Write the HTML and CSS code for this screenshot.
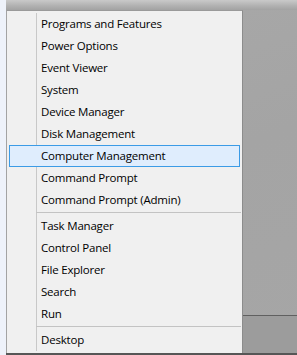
FILE: index.html
```html
<!DOCTYPE html>
<html>
  <head>
    <meta name="viewport" content="width=device-width, initial-scale=1.0" />
    <title>Quick Link Menu</title>
    <link rel="stylesheet" href="styles.css">
  </head>

  <body>
    <div class="screen">
      <div class="side"></div>

      <div class="desk">
        <div class="top-glow"></div>

        <div class="middle">
          <!-- Win+X menu -->
          <ul class="menu">
            <li class="item">Programs and Features</li>
            <li class="item">Power Options</li>
            <li class="item">Event Viewer</li>
            <li class="item">System</li>
            <li class="item">Device Manager</li>
            <li class="item">Disk Management</li>
            <li class="item active">Computer Management</li>
            <li class="item">Command Prompt</li>
            <li class="item">Command Prompt (Admin)</li>
            <li class="sep"></li>
            <li class="item">Task Manager</li>
            <li class="item">Control Panel</li>
            <li class="item">File Explorer</li>
            <li class="item">Search</li>
            <li class="item">Run</li>
            <li class="sep"></li>
            <li class="item">Desktop</li>
          </ul>

          <div class="desk-right">
            <div class="taskbar"></div>
          </div>
        </div>

        <div class="bottom-bar"></div>
      </div>
    </div>
  </body>
</html>
```

FILE: styles.css
```css
body {
  margin: 0;
  padding: 0;
  background: #eef2fa;
  font-family: "Open Sans", "Noto Sans", sans-serif;
  font-size: 11.5px;
  letter-spacing: -0.2px;
  color: #000;
}

.screen {
  display: flex;
  height: 355px;
  overflow: hidden;
}

.side {
  width: 6px;
  flex-shrink: 0;
}

.desk {
  flex: 1;
  display: flex;
  flex-direction: column;
  background: linear-gradient(160deg, #a9a9a9 0%, #a4a4a4 50%, #a6a6a6 100%);
}

.top-glow {
  height: 10px;
  background: linear-gradient(#c9c9c9, #b0b0b0 60%, #a2a2a2);
}

.middle {
  flex: 1;
  display: flex;
}

.menu {
  list-style: none;
  margin: 0;
  padding: 2px 0;
  width: 235px;
  border-top: 1px solid #9a9a9a;
  border-left: 1px solid #a3a3a3;
  border-right: 1px solid #8c8c8c;
  background: linear-gradient(#c8c8c8, #c8c8c8) 29px 2px / 1px 338px no-repeat, #f0f0f0;
}

.item {
  height: 20px;
  line-height: 19px;
  margin: 0 2px;
  padding-left: 31px;
  border: 1px solid transparent;
  white-space: nowrap;
}

.item.active {
  background: #dfedfd;
  border-color: #3b9be6;
}

.sep {
  height: 1px;
  margin: 1px 1px 2px 29px;
  background: #c3c3c3;
}

.desk-right {
  flex: 1;
  display: flex;
  flex-direction: column;
  justify-content: flex-end;
}

.taskbar {
  height: 37px;
  border-top: 1px solid #606060;
  background: #9c9c9c;
}

.bottom-bar {
  height: 2px;
  background: #565656;
}
```
